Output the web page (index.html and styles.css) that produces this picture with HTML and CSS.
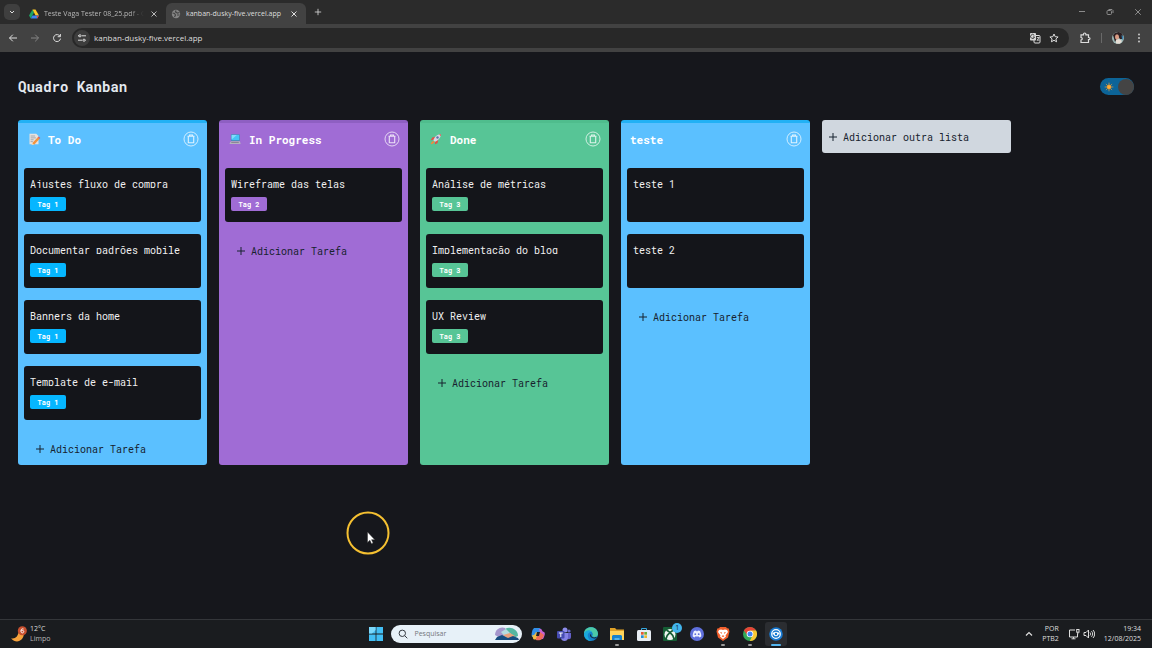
FILE: index.html
```html
<!DOCTYPE html>
<html lang="pt-BR">
<head>
<meta charset="utf-8">
<meta name="viewport" content="width=device-width, initial-scale=1">
<title>Quadro Kanban</title>
<link rel="stylesheet" href="styles.css">
</head>
<body>
<svg class="defs" aria-hidden="true">
  <symbol id="trash" viewBox="0 0 16 16"><circle cx="8" cy="8" r="7" stroke-width=".9"/><path d="M4.500 5.300h7M6.500 5.200V4h3v1.200M5.300 5.400v6.300h5.400V5.400" stroke-width="1.100"/></symbol>
  <symbol id="plus" viewBox="0 0 10 10"><path d="M5 1v8M1 5h8"/></symbol>
  <symbol id="close" viewBox="0 0 10 10"><path d="M2.500 2.500l5 5M7.500 2.500l-5 5"/></symbol>
</svg>

<div class="desktop">
  <div class="tabstrip">
    <button class="tab-search" aria-label="Pesquisar guias"><svg class="i8" viewBox="0 0 8 8"><path d="M2 3l2 2 2-2"/></svg></button>
    <div class="tab">
      <svg class="i10 solid" viewBox="0 0 20 18"><path fill="#1ea362" d="M7 0L0 12l3.500 6L10 6z"/><path fill="#ffc928" d="M7 0h6l7 12h-7z"/><path fill="#3c86f4" d="M7 12h13l-3.500 6h-13z"/><path fill="#e94335" d="M15 14l5-2-3.500 6z"/></svg>
      <button class="tab-name tab-fade">Teste Vaga Tester 08_25.pdf - Google Drive</button>
      <button class="icon-btn" aria-label="Fechar guia"><svg class="i10"><use href="#close"/></svg></button>
    </div>
    <div class="tab tab-active">
      <svg class="i10" viewBox="0 0 10 10"><circle cx="5" cy="5" r="4.200" fill="#858585" stroke="none"/><path stroke="#454545" stroke-width="1.200" d="M1.500 4l2 .5 1 1.500-1 2M5 1.500l-.5 1.500 2 1 2-.5M6 6h2.500"/></svg>
      <button class="tab-name">kanban-dusky-five.vercel.app</button>
      <button class="icon-btn" aria-label="Fechar guia"><svg class="i10"><use href="#close"/></svg></button>
    </div>
    <button class="icon-btn tab-new" aria-label="Nova guia"><svg class="i8"><use href="#plus"/></svg></button>
    <div class="window-controls">
      <button class="icon-btn" aria-label="Minimizar"><svg class="i8" viewBox="0 0 8 8"><path d="M1 3.500h6"/></svg></button>
      <button class="icon-btn" aria-label="Restaurar"><svg class="i8" viewBox="0 0 8 8"><rect x="1" y="2.500" width="4.500" height="4" rx="1"/><path d="M2.500 1.500H6L7 2.500V5"/></svg></button>
      <button class="icon-btn" aria-label="Fechar"><svg class="i8" viewBox="0 0 8 8"><path d="M1.200 1.200l5.600 5.600M6.800 1.200L1.200 6.800"/></svg></button>
    </div>
  </div>

  <div class="toolbar">
    <div class="nav">
      <button class="icon-btn" aria-label="Voltar"><svg class="i10" viewBox="0 0 10 10"><path d="M9 5H1.500M4.800 1.700L1.500 5l3.300 3.300"/></svg></button>
      <button class="icon-btn dim" aria-label="Avançar"><svg class="i10" viewBox="0 0 10 10"><path d="M1 5h7.500M5.200 1.700L8.500 5 5.200 8.300"/></svg></button>
      <button class="icon-btn" aria-label="Recarregar"><svg class="i10" viewBox="0 0 10 10"><path d="M8 3.200A3.500 3.500 0 1 0 8.500 5.600M8.400 1v2.700H5.700"/></svg></button>
    </div>
    <div class="omnibox">
      <button class="site-info" aria-label="Informações do site"><svg class="i10" viewBox="0 0 10 10"><path d="M1 2.800h1M5 2.800h4M1 7.200h4M8.500 7.200H9"/><circle cx="3" cy="2.800" r="1.100"/><circle cx="7" cy="7.200" r="1.100"/></svg></button>
      <input class="url" type="text" aria-label="Endereço" value="kanban-dusky-five.vercel.app">
      <button class="icon-btn" aria-label="Traduzir"><svg class="i12" viewBox="0 0 12 12"><rect x="5" y="3.500" width="6" height="7.500" rx="1"/><rect x="1" y="1" width="6" height="7.500" rx=".8" fill="#d4d4d4" stroke="none"/><path stroke="#333" stroke-width=".9" d="M5.200 3.300A2 2 0 1 0 5.500 5H4"/><path stroke-width=".8" d="M7.800 5.500h2.500M9 5v.5M10 5.500L8 9M8.200 6.800L10 8.800"/></svg></button>
      <button class="icon-btn" aria-label="Favoritos"><svg class="i10" viewBox="0 0 10 10"><path stroke-linejoin="round" d="M5 1l1.200 2.700 2.900.3-2.200 1.900.7 2.900L5 7.300 2.400 8.800l.7-2.900L.9 4l2.900-.3z"/></svg></button>
    </div>
    <div class="extras">
      <button class="icon-btn" aria-label="Extensões"><svg class="i12" viewBox="0 0 12 12"><path stroke-width="1.200" d="M2 2.800h2.500v-.6a1.200 1.200 0 0 1 2.400 0v.6H9.500v2.700h.4a1.100 1.100 0 0 1 0 2.200h-.4v2.800H2V8c1.700-.2 1.700-2.300 0-2.500z"/></svg></button>
      <span class="divider"></span>
      <button class="icon-btn" aria-label="Perfil"><svg class="i12 solid" viewBox="0 0 12 12"><circle cx="6" cy="6" r="6" fill="#9bb7b6"/><path fill="#2d2023" d="M1 3a6 6 0 0 1 9.500-1l.5 5H8L6 4 3 10z"/><ellipse cx="5" cy="5" rx="2" ry="2.700" fill="#d99b83"/><path fill="#e7ddd4" d="M4 8l3-1 3 2-2 2.700-4-.2z"/><path fill="#327fae" d="M9.500 3l2 2-.5 3-1-1z"/></svg></button>
      <button class="icon-btn" aria-label="Menu"><svg class="i10 solid" viewBox="0 0 10 10"><g fill="#d4d4d4"><circle cx="5" cy="1.500" r=".9"/><circle cx="5" cy="5" r=".9"/><circle cx="5" cy="8.500" r=".9"/></g></svg></button>
    </div>
  </div>

  <main class="page">
    <header class="page-head">
      <h1 class="page-title">Quadro Kanban</h1>
      <label class="theme"><input class="theme-input" type="checkbox" role="switch" aria-label="Tema escuro" checked>
        <svg class="sun" viewBox="0 0 12 12"><path stroke="#e5a23c" stroke-width=".8" d="M6 .8v10.400M.8 6h10.400M2.300 2.300l7.400 7.400M9.700 2.300L2.300 9.700"/><circle cx="6" cy="6" r="2.600" fill="#ffae35" stroke="#b57932" stroke-width=".5"/></svg>
        <span class="knob"></span>
      </label>
    </header>

    <div class="board">
      <section class="list blue">
        <div class="list-head">
          <svg class="emoji solid" viewBox="0 0 16 16"><path fill="#e7e2df" d="M2 1h9l3 3v11H2z"/><path stroke="#92959d" d="M3.500 4h6M3.500 6.500h7M3.500 9h4M3.500 11.500h3"/><path fill="#f2943d" d="M5.500 13.500L13 5.500l2.500 2.200-7.300 7.800z"/><path fill="#e8505b" d="M13 5.500l1-1 2.400 2-1 1.200z"/><path fill="#f6d7a6" d="M5.500 13.500l-.8 2.500 3.500-.5z"/></svg>
          <h2 class="list-title">To Do</h2>
          <button class="trash" aria-label="Excluir lista"><svg class="i16"><use href="#trash"/></svg></button>
        </div>
        <div class="cards">
          <article class="card"><h3 class="task">Ajustes fluxo de compra</h3><span class="tag">Tag 1</span></article>
          <article class="card"><h3 class="task">Documentar padrões mobile</h3><span class="tag">Tag 1</span></article>
          <article class="card"><h3 class="task">Banners da home</h3><span class="tag">Tag 1</span></article>
          <article class="card"><h3 class="task">Template de e-mail</h3><span class="tag">Tag 1</span></article>
          <button class="add"><svg class="i10"><use href="#plus"/></svg>Adicionar Tarefa</button>
        </div>
      </section>

      <section class="list purple">
        <div class="list-head">
          <svg class="emoji solid" viewBox="0 0 16 16"><rect x="2.500" y="1.500" width="12" height="9" rx="1" fill="#4c89b8"/><path fill="#45c5f6" d="M3.500 2.500h10v7h-10z"/><path fill="#83ddfb" d="M3.500 2.500h7l-7 6z"/><path fill="#b6b2c0" d="M2.500 11h12l1 3.500H.5z"/><path stroke="#74717f" d="M3 12.500h10"/></svg>
          <h2 class="list-title">In Progress</h2>
          <button class="trash" aria-label="Excluir lista"><svg class="i16"><use href="#trash"/></svg></button>
        </div>
        <div class="cards">
          <article class="card"><h3 class="task">Wireframe das telas</h3><span class="tag">Tag 2</span></article>
          <button class="add"><svg class="i10"><use href="#plus"/></svg>Adicionar Tarefa</button>
        </div>
      </section>

      <section class="list green">
        <div class="list-head">
          <svg class="emoji solid" viewBox="0 0 16 16"><path fill="#e35045" d="M7 5L3 6 1 9.500l4-.5zM11 9l-1 4.500L6.500 15 7 11z"/><path fill="#d8d5e4" d="M4.500 9.500C6 5 9.500 1.500 14.500 1.500 14.500 6 11 10 6.500 11.500z"/><path fill="#e35045" d="M12 1.700l2.500-.2v2.700z"/><circle cx="10" cy="6" r="1.600" fill="#5576a8"/><path fill="#f08a3d" d="M4.500 10.500L6 12c-1 1.500-2.500 2.500-5 3 .3-2.500 1.500-4 3.500-4.500z"/></svg>
          <h2 class="list-title">Done</h2>
          <button class="trash" aria-label="Excluir lista"><svg class="i16"><use href="#trash"/></svg></button>
        </div>
        <div class="cards">
          <article class="card"><h3 class="task">Análise de métricas</h3><span class="tag">Tag 3</span></article>
          <article class="card"><h3 class="task">Implementação do blog</h3><span class="tag">Tag 3</span></article>
          <article class="card"><h3 class="task">UX Review</h3><span class="tag">Tag 3</span></article>
          <button class="add"><svg class="i10"><use href="#plus"/></svg>Adicionar Tarefa</button>
        </div>
      </section>

      <section class="list blue">
        <div class="list-head">
          <h2 class="list-title">teste</h2>
          <button class="trash" aria-label="Excluir lista"><svg class="i16"><use href="#trash"/></svg></button>
        </div>
        <div class="cards">
          <article class="card"><h3 class="task">teste 1</h3></article>
          <article class="card"><h3 class="task">teste 2</h3></article>
          <button class="add"><svg class="i10"><use href="#plus"/></svg>Adicionar Tarefa</button>
        </div>
      </section>

      <button class="add add-list"><svg class="i10"><use href="#plus"/></svg>Adicionar outra lista</button>
    </div>
  </main>

  <footer class="taskbar">
    <button class="weather" aria-label="Clima: 12°C, limpo">
      <svg class="moon solid" viewBox="0 0 18 18"><path fill="#f6a23c" d="M13 5c3 8-6 16-13 8 5 1 7-2 8-6z"/><circle cx="12" cy="5" r="4.800" fill="#c8502f"/><path stroke="#fff" stroke-width="1" d="M13.300 3.200c-2-.8-2.800.8-2.800 2.300 0 2.400 3 2.300 3 .4 0-1.500-2-1.700-2.800-.5"/></svg>
      <span class="stack"><span>12°C</span><span class="muted">Limpo</span></span>
    </button>

    <div class="apps">
      <button class="app" aria-label="Iniciar"><svg class="i14 solid" viewBox="0 0 14 14"><g fill="#42bff5"><path d="M0 0h6.600v6.600H0zM7.400 0H14v6.600H7.400zM0 7.400h6.600V14H0zM7.400 7.400H14V14H7.400z"/></g><path fill="#7bd8fb" d="M0 0h6.600v3L3 6.600H0z"/></svg></button>
      <label class="search">
        <svg class="i10 lens" viewBox="0 0 10 10"><circle cx="4.300" cy="4.300" r="3.200"/><path d="M6.700 6.700L9.300 9.300"/></svg>
        <input class="search-input" type="text" placeholder="Pesquisar" aria-label="Pesquisar">
        <svg class="scene solid" viewBox="0 0 26 14"><path fill="#a596cc" d="M1 8C1 2 7-1 11 1l3 8-6 3z"/><path fill="#55b7a1" d="M11 2c5-3 13 0 13 7l-7 3z"/><path fill="#b6dce1" d="M7 5l5-3 5 5-5 4z"/><path fill="#e9a27d" d="M9 8l7-2 5 3-5 4z"/><path fill="#164d80" d="M1 13l2-3 5-2 6 3 5-2 5 2 1 2z"/></svg>
      </label>
      <button class="app" aria-label="Copilot"><svg class="i14 solid" viewBox="0 0 14 14"><path fill="#318fe7" d="M3 1h5c2 0 2 2 3 4L7 6 5 10H2C-.5 10 1 5 1.500 3z"/><path fill="#f0bc43" d="M1 8c2 1 3-1 4-3l2 1-1 5c-.5 2-4 2-4 0z"/><path fill="#c663d3" d="M8 2h2c1 0 1 3 3 3 2 1 0 5-1 7H8l1-6z"/><path fill="#ef6b58" d="M5 11l4-6 4 3-2 4c-1 1.500-5 1.500-6 1z"/><path fill="#202229" d="M6 5h3L8 9H5z"/></svg></button>
      <button class="app" aria-label="Teams"><svg class="i14 solid" viewBox="0 0 14 14"><circle cx="8" cy="3" r="2.500" fill="#8d8dec"/><circle cx="12" cy="4" r="1.600" fill="#6968cc"/><path fill="#6460c9" d="M9 6h5v4c0 3-4 3-5 0z"/><path fill="#8583e6" d="M4 6h7v5c0 4-7 4-7 0z"/><rect y="4" width="7.500" height="7.500" rx="1" fill="#454bb1"/><path stroke="#fff" d="M1.800 6h4M3.800 6v4"/></svg></button>
      <button class="app" aria-label="Edge"><svg class="i14 solid" viewBox="0 0 14 14"><circle cx="7" cy="7" r="7" fill="#1480cb"/><path fill="#4cc9a6" d="M2 2c5-4 12-1 12 5 0 3-4 4-6 2 2-2 0-5-3-5-2 0-4 1-5 3 0-2 .5-4 2-5z"/><path fill="#1aa9dc" d="M0 7c1-4 6-5 8-2-3-.5-5 2-4 5 .5 2 2 3 3 4-4 0-7-3-7-7z"/><path fill="#17212b" d="M7 7c0 4 3 4 5 3l1 1c-3 1-7 0-7-3z"/></svg></button>
      <button class="app running" aria-label="Explorador de Arquivos"><svg class="i14 solid" viewBox="0 0 14 14"><path fill="#dfa126" d="M0 1h5l1.500 1.500H14V6H0z"/><path fill="#ffd35a" d="M0 4h14v9H0z"/><path fill="#1782cc" d="M3 8h8l1 1v4H2V9z"/><path fill="#55b4e9" d="M4.500 11h5v2h-5z"/></svg></button>
      <button class="app" aria-label="Microsoft Store"><svg class="i14 solid" viewBox="0 0 14 14"><path stroke="#36a7dd" d="M4.500 4V1.500h5V4"/><rect y="3" width="14" height="11" rx="1.500" fill="#e7edf3"/><path fill="#e65934" d="M4 5h2.700v2.700H4z"/><path fill="#6fad3b" d="M7.300 5H10v2.700H7.300z"/><path fill="#258fd5" d="M4 8.300h2.700V11H4z"/><path fill="#f1b72e" d="M7.300 8.300H10V11H7.300z"/></svg></button>
      <button class="app" aria-label="Xbox"><svg class="i14 solid" viewBox="0 0 14 14"><rect width="14" height="14" rx="1" fill="#155d34"/><circle cx="7" cy="7.500" r="5.500" fill="#eff5f0"/><path stroke="#155d34" stroke-width="1.600" d="M3 12c.5-3 2-5 4-6.500C9 7 10.500 9 11 12M3.500 3L7 5.500 10.500 3"/></svg><span class="badge">1</span></button>
      <button class="app" aria-label="Discord"><svg class="i14 solid" viewBox="0 0 14 14"><circle cx="7" cy="7" r="7" fill="#5f70dd"/><path fill="#edf0ff" d="M4 4l2-.5.5.7h1l.5-.7 2 .5c1 2 1.500 4 1.200 5.500L9.500 10.500l-.7-1H5.200l-.7 1-1.700-1C2.500 8 3 6 4 4z"/><circle cx="5.300" cy="7.200" r=".9" fill="#5f70dd"/><circle cx="8.700" cy="7.200" r=".9" fill="#5f70dd"/></svg></button>
      <button class="app running" aria-label="Brave"><svg class="i14 solid" viewBox="0 0 14 14"><path fill="#f2602d" d="M4 0h6l1 1.200 1.700.3.8 3-1.500 6L7 14l-5-3.500-1.500-6 .8-3L3 1.200z"/><path fill="#fff" d="M3 3l2-.5 2 .5 2-.5 2 .5 1 2-2.500 3.500.5 1L7 12 4 9.500l.5-1L2 5z"/><path fill="#f2602d" d="M4 5l2 .5L5.500 7zM10 5l-2 .5.5 1.500zM5.500 9L7 8.300 8.500 9 7 10.200z"/></svg></button>
      <button class="app running" aria-label="Chrome"><svg class="i14 solid" viewBox="0 0 14 14"><circle cx="7" cy="7" r="7" fill="#32a957"/><path fill="#e64436" d="M.9 3.600A7 7 0 0 1 13.100 3.600L7 4 5 9z"/><path fill="#fac832" d="M13.100 3.600A7 7 0 0 1 6.800 14L10 7.500 7 3.600z"/><circle cx="7" cy="7" r="3.300" fill="#fff"/><circle cx="7" cy="7" r="2.500" fill="#4285f4"/></svg></button>
      <button class="app current" aria-label="Gravador"><svg class="i14 solid" viewBox="0 0 14 14"><circle cx="7" cy="7" r="6.800" fill="#1879d1"/><circle cx="7" cy="7" r="4.300" stroke="#fff" stroke-width="1.200"/><path fill="#fff" d="M3.500 5.500h7v2h-7z"/><circle cx="7" cy="7" r="2.300" fill="#fff"/><circle cx="7" cy="7" r="1.200" fill="#1879d1"/></svg></button>
    </div>

    <div class="tray">
      <button class="icon-btn" aria-label="Ícones ocultos"><svg class="i8" viewBox="0 0 8 8"><path stroke-width="1.200" d="M1 5.500l3-3 3 3"/></svg></button>
      <button class="tray-text"><span>POR</span><span>PTB2</span></button>
      <button class="quick" aria-label="Rede e volume">
        <svg class="i12" viewBox="0 0 12 12"><path d="M7 2H1.500v7h8V5.500M3.500 10.800h4M5.500 9v1.800"/><rect x="8.700" y="1.500" width="2.300" height="2.700"/><path d="M9.800 4.200v2"/></svg>
        <svg class="i12" viewBox="0 0 12 12"><path d="M1 4.500h2L5.500 2v8L3 7.500H1zM7 4.500c.8 1 .8 2 0 3M8.500 3.200c1.600 2 1.600 3.600 0 5.600M10 2c2.200 2.500 2.200 5.500 0 8"/></svg>
      </button>
      <button class="tray-text"><span>19:34</span><span>12/08/2025</span></button>
    </div>
  </footer>

  <svg class="pointer" viewBox="0 0 44 44" aria-hidden="true"><circle cx="22" cy="22" r="20.500" stroke="#f5c031" stroke-width="2"/><path fill="#fff" stroke="#333" stroke-width=".5" d="M21.500 21v10.500l2.400-2.200 1.600 3.500 1.600-.8-1.500-3.300h3.200z"/></svg>
</div>
</body>
</html>
```

FILE: styles.css
```css
* { box-sizing: border-box; }

body {
  margin: 0;
  background: #16171c;
  font-family: "Open Sans", "Noto Sans", sans-serif;
  font-size: 8px;
  color: #dedede;
}

button, input { font: inherit; color: inherit; }

button {
  border: 0;
  padding: 0;
  background: none;
  cursor: pointer;
}

svg { display: block; flex: none; fill: none; stroke: currentColor; }
.solid { stroke: none; }

.defs { position: absolute; width: 0; height: 0; }
.i8 { width: 8px; height: 8px; }
.i10 { width: 10px; height: 10px; }
.i12 { width: 12px; height: 12px; }
.i14 { width: 14px; height: 14px; }
.i16 { width: 16px; height: 16px; }

.desktop { display: flex; flex-direction: column; min-height: 100vh; }

/* Browser window */
.tabstrip {
  display: flex;
  align-items: center;
  height: 24px;
  padding: 0 8px 0 4px;
  background: #2b2b2b;
}

.tab-search {
  display: grid;
  place-items: center;
  width: 16px;
  height: 16px;
  margin-right: 4px;
  border-radius: 5px;
  background: #3f3f3f;
}

.tab {
  display: flex;
  align-items: center;
  align-self: flex-end;
  gap: 5px;
  width: 142px;
  height: 21px;
  padding: 0 7px 0 5px;
  color: #b8b8b8;
  font-size: 7px;
}

.tab-active {
  width: 140px;
  border-radius: 6px 6px 0 0;
  background: #424242;
  color: #dedede;
}

.tab-name {
  flex: 1;
  min-width: 0;
  overflow: hidden;
  text-align: left;
  white-space: nowrap;
}

.tab-fade { mask-image: linear-gradient(to right, #000 85%, transparent); }
.icon-btn { display: grid; place-items: center; flex: none; }
.tab-new { margin-left: 8px; }

.window-controls {
  display: flex;
  gap: 20px;
  margin-left: auto;
  padding-right: 2px;
  color: #8b8b8b;
}

.toolbar {
  display: flex;
  align-items: center;
  height: 28px;
  padding: 0 8px;
  background: #424242;
}

.nav { display: flex; gap: 12px; margin-right: 10px; }
.dim { color: #858585; }

.omnibox {
  display: flex;
  align-items: center;
  flex: 1;
  gap: 8px;
  min-width: 0;
  height: 20px;
  padding: 0 10px 0 2px;
  border-radius: 10px;
  background: #282828;
}

.site-info {
  display: grid;
  place-items: center;
  width: 16px;
  height: 16px;
  border-radius: 50%;
  background: #3d3d3d;
}

.url {
  flex: 1;
  min-width: 0;
  margin-left: -4px;
  padding: 0 0 2px;
  border: 0;
  outline: 0;
  background: none;
}

.extras { display: flex; align-items: center; gap: 10px; margin-left: 10px; }
.divider { width: 1px; height: 10px; background: #696969; }

/* Kanban page */
.page {
  flex: 1;
  padding: 26px 18px;
  font-family: "Roboto Mono", "DejaVu Sans Mono", monospace;
  font-size: 10px;
}

.page-head {
  display: flex;
  align-items: center;
  justify-content: space-between;
  margin-bottom: 25px;
}

.page-title { margin: 0; font-size: 14px; line-height: 17px; color: #e3e9f0; }

.theme {
  display: flex;
  align-items: center;
  justify-content: space-between;
  width: 34px;
  height: 17px;
  padding-left: 4px;
  border-radius: 9px;
  background: #0c6498;
}

.theme-input { position: absolute; opacity: 0; }
.sun { width: 10px; height: 10px; }
.knob { width: 16px; height: 16px; border-radius: 50%; background: #444; }

.board { display: flex; gap: 12px; }

.list {
  flex: none;
  width: 189px;
  padding: 0 6px;
  border-top: 3px solid var(--edge);
  border-radius: 3px;
  background: var(--fill);
}

.blue { --fill: #5bc0ff; --edge: #22b1f5; --tag: #05b6ff; }
.purple { --fill: #a06cd5; --edge: #8e5fc2; --tag: #a06cd5; }
.green { --fill: #57c596; --edge: #4fbd8d; --tag: #57c596; }

.list-head {
  display: flex;
  align-items: center;
  gap: 7px;
  padding: 8px 2px 21px 3px;
  color: #fff;
}

.emoji { width: 14px; height: 12px; }
.list-title { margin: 0; padding-top: 1px; font-size: 11px; line-height: 15px; }
.trash { margin-left: auto; opacity: .8; }

.cards { display: flex; flex-direction: column; gap: 12px; }

.card {
  min-height: 54px;
  padding: 9px 6px 11px;
  border-radius: 3px;
  background: #14151a;
}

/* The task name box is shorter than its line, so descenders are cut */
.task {
  height: 11px;
  margin: 0 0 9px;
  overflow: hidden;
  font-size: 10px;
  font-weight: 400;
  line-height: 15px;
  white-space: nowrap;
  color: #f0f0f0;
}

.tag {
  display: block;
  width: max-content;
  min-width: 36px;
  padding: 1px 7px 0;
  border-radius: 2px;
  background: var(--tag);
  color: #fff;
  font-size: 7px;
  font-weight: 700;
  line-height: 13px;
  text-align: center;
}

.add {
  display: flex;
  align-items: center;
  gap: 5px;
  height: 33px;
  padding: 1px 11px 0;
  color: #17222e;
}

.add-list {
  flex: none;
  width: 189px;
  padding: 1px 6px 0;
  border-radius: 3px;
  background: #d0d7df;
}

/* Windows taskbar */
.taskbar {
  display: grid;
  grid-template-columns: 1fr 422px 1fr;
  align-items: center;
  height: 29px;
  padding: 0 11px;
  border-top: 1px solid #34363a;
  background: #1a1c1f;
  font-size: 7px;
  line-height: 10px;
}

.weather { display: flex; align-items: center; justify-self: start; gap: 2px; }
.moon { width: 17px; height: 17px; }
.stack { display: grid; text-align: left; }
.muted { color: #b8b8b8; }

.apps { display: flex; align-items: center; justify-content: space-between; }

.app {
  position: relative;
  display: grid;
  place-items: center;
  width: 22px;
  height: 24px;
  border-radius: 3px;
}

.running::after, .current::after {
  content: "";
  position: absolute;
  bottom: 0;
  width: 4px;
  height: 2px;
  border-radius: 1px;
  background: #9b9b9b;
}

.current { background: #2b2d31; }
.current::after { width: 10px; background: #55b7f1; }

.badge {
  position: absolute;
  top: 1px;
  right: -1px;
  width: 10px;
  height: 10px;
  border-radius: 50%;
  background: #42b5ed;
  color: #10222e;
}

.search {
  display: flex;
  align-items: center;
  gap: 6px;
  width: 131px;
  height: 18px;
  padding: 0 2px 0 7px;
  border-radius: 9px;
  background: #e7f1f8;
  color: #363b42;
}

.search-input {
  flex: 1;
  min-width: 0;
  padding: 0;
  border: 0;
  outline: 0;
  background: none;
}

.search-input::placeholder { color: #74777b; }
.scene { width: 26px; height: 14px; }

.tray { display: flex; align-items: center; justify-self: end; gap: 9px; }
.tray-text { display: grid; text-align: right; }
.quick { display: flex; gap: 3px; }

/* Highlighted mouse pointer drawn over the desktop */
.pointer { position: fixed; left: 346px; top: 511px; width: 44px; height: 44px; pointer-events: none; }
```
